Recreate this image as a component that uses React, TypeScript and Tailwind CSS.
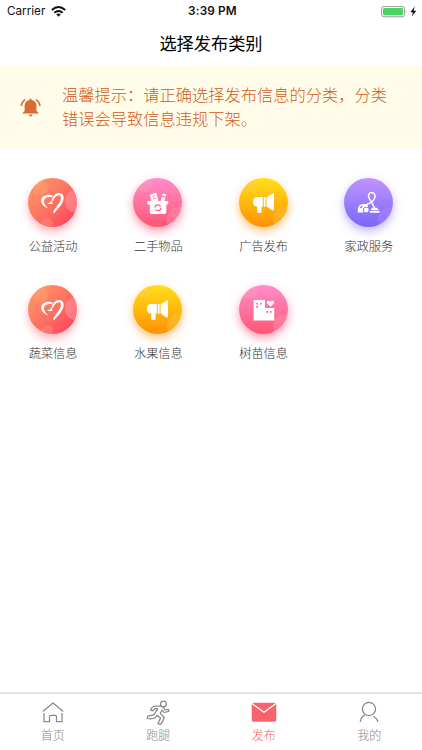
import type { ReactNode } from "react"

type Tone = "coral" | "pink" | "amber" | "violet"

const TONES: Record<Tone, { ball: string; glow: string; bubble: string }> = {
  coral: { ball: "bg-linear-to-br from-[#ff9d68] via-[#fd7361] to-[#ff2f5c]", glow: "shadow-[0_5px_9px_rgba(255,80,100,0.42)]", bubble: "bg-[#ff9aa8]/50" },
  pink: { ball: "bg-linear-to-b from-[#ff8ccb] to-[#ff5473]", glow: "shadow-[0_4px_10px_rgba(255,84,125,0.6)]", bubble: "bg-[#ffa0b8]/35" },
  amber: { ball: "bg-linear-to-b from-[#ffe018] to-[#ff8f05]", glow: "shadow-[0_4px_10px_rgba(255,150,20,0.55)]", bubble: "bg-[#ffc846]/40" },
  violet: { ball: "bg-linear-to-b from-[#c193fd] to-[#7a66f8]", glow: "shadow-[0_4px_10px_rgba(130,105,250,0.5)]", bubble: "bg-[#b08aff]/40" },
}

const heart = (
  <>
    <path
      d="M23.6 22.8C24.3 18 28 14.6 31.4 14.9C35.9 15.4 36.6 20 34.6 24.2C32.6 28.4 29.6 31 26.2 35.2L25.2 34.6C25.6 31.6 30.2 27.2 31.9 23.6C33.5 20 33.3 17.2 31 17.2C28.4 17.2 26.2 19.6 24.8 23Z"
      fill="#fff"
    />
    <path
      d="M24.6 17.6C20.8 15.6 14.2 17.4 13.2 21.8C12.6 25.4 15.2 28.6 20.4 30.6C17.2 27.8 15.6 25.2 16 22.6C16.6 19.6 20.2 18.4 24.2 19.4Z"
      fill="#fff"
    />
    <path d="M20.4 25.4L24 25.2L22.9 23.6" fill="none" stroke="#fff" strokeWidth="1.4" strokeLinecap="round" strokeLinejoin="round" />
  </>
)

const basket = (
  <>
    <path d="M17.3 17L23 15.2L25.2 23.5H19Z" fill="#fff" stroke="#fff" strokeWidth="0.8" strokeLinejoin="round" />
    <path d="M19.4 18.5L22.2 17.7M20 20.8L23 20" stroke="#ff7ea9" strokeWidth="1" />
    <path d="M29.8 15.6L33.4 16.7L32.8 18.6L29.2 17.5ZM28.8 18.7L32.4 19.8L31.2 23.5H27.4Z" fill="#fff" />
    <path d="M15.2 23H34.4Q35.3 23 35.3 23.9V25.6Q35.3 26.5 34.4 26.5H33.3V34.2Q33.3 36 31.5 36H18.6Q16.8 36 16.8 34.2V26.5H15.3Q14.4 26.5 14.4 25.6V23.8Q14.4 23 15.2 23Z" fill="#fff" />
    <circle cx="25" cy="29.8" r="2.9" fill="none" stroke="#ff648f" strokeWidth="1.2" strokeDasharray="7.4 1.7" />
  </>
)

const megaphone = (
  <g fill="#fff">
    <path d="M23.8 19.1V28.6H22.5V34.3Q22.5 35 21.8 35H19Q18.3 35 18.3 34.3V28.6H17.6Q14 28.2 14 23.9T17.6 19.1Z" />
    <path d="M24.8 19H26.6V28.8H24.8Z" />
    <path d="M27.6 19.2L33.6 15.4Q35 14.8 35 16.2V31.6Q35 33 33.6 32.4L27.6 28.6Z" />
  </g>
)

const vacuum = (
  <>
    <path d="M13.8 34.5V31.2Q14.4 26 19.8 26H23.8V34.5Z" fill="#fff" />
    <path d="M15.6 30Q16.6 27.8 18.8 27.6L17.6 30.2Z" fill="#957af9" />
    <circle cx="22.3" cy="32" r="3.3" fill="#8d74f8" />
    <circle cx="22.3" cy="32" r="2.4" fill="#fff" />
    <path d="M23.2 26.4C27.6 24.6 31.2 21.7 31 17.9C30.8 14.3 26.8 13.5 25 16C23.2 18.8 25.8 21.5 27.4 23.8L31 31" fill="none" stroke="#fff" strokeWidth="1.5" strokeLinecap="round" />
    <path d="M28.3 29.8H33L35 32.2H26.3ZM25.8 33H35.7V34.8H25.8Z" fill="#fff" />
  </>
)

const buildings = (
  <>
    <path d="M14.6 15H26V22.9H35.3V35.4H14.6Z" fill="#fff" />
    <path d="M17.2 17.9H19V19.6H17.2ZM20.9 17.9H22.7V19.6H20.9ZM17.2 21H19V22.7H17.2ZM27.3 26H29.1V27.8H27.3ZM30.8 26H32.6V27.8H30.8Z" fill="#ff6a97" />
    <path d="M31.5 21.8L28.3 18.6C26.7 16.3 29.9 14.4 31.5 16.8C33.1 14.4 36.4 16.3 34.7 18.6Z" fill="#fff" />
  </>
)

const CATEGORIES: { name: string; tone: Tone; icon: ReactNode }[] = [
  { name: "公益活动", tone: "coral", icon: heart },
  { name: "二手物品", tone: "pink", icon: basket },
  { name: "广告发布", tone: "amber", icon: megaphone },
  { name: "家政服务", tone: "violet", icon: vacuum },
  { name: "蔬菜信息", tone: "coral", icon: heart },
  { name: "水果信息", tone: "amber", icon: megaphone },
  { name: "树苗信息", tone: "pink", icon: buildings },
]

function Category({ name, tone, icon }: { name: string; tone: Tone; icon: ReactNode }) {
  const t = TONES[tone]
  return (
    <button type="button" className="flex h-[107px] flex-col items-center">
      <span className={`block rounded-full ${t.glow}`}>
        <span className={`relative block h-[49px] w-[49px] overflow-hidden rounded-full ${t.ball}`}>
          {tone === "coral" ? (
            <>
              <span className={`absolute top-[12px] left-[37px] h-[23px] w-[23px] rounded-full ${t.bubble}`} />
              <span className="absolute top-[3px] left-[6px] h-[14px] w-[14px] rounded-full bg-[#ffad78]/35" />
              <span className="absolute top-[40px] left-[13px] h-[12px] w-[12px] rounded-full bg-[#ff9a88]/35" />
            </>
          ) : (
            <>
              <span className={`absolute -top-[4px] left-[1px] h-[18px] w-[18px] rounded-full ${t.bubble}`} />
              <span className={`absolute top-[29px] left-[34px] h-[25px] w-[25px] rounded-full ${t.bubble}`} />
            </>
          )}
          <svg className="relative block h-[49px] w-[49px]" viewBox="0 0 49 49">{icon}</svg>
        </span>
      </span>
      <span className="mt-[10px] pl-px text-[12.2px] leading-[18px] text-[#333]">{name}</span>
    </button>
  )
}

const TABS: { name: string; active?: boolean; icon: ReactNode }[] = [
  {
    name: "首页",
    icon: <path d="M3.8 11.5L14 3L24.2 11.5M5 13V21.5H10.5V16.8Q10.5 15.3 12 15.3H16Q17.5 15.3 17.5 16.8V21.5H23V13" />,
  },
  {
    name: "跑腿",
    icon: (
      <>
        <circle cx="19.5" cy="3.9" r="2.9" />
        <path d="M16 6L9.8 6.3Q7.2 7.6 6.6 10.2L8.7 10.8L11.2 8.5L13.8 8.7L9.8 14.9L3.6 16.2L3.3 18.5Q7.8 19.3 11.3 17.8L13 15.2L16.6 18L14 23.4L16.4 24.6Q18.8 22 20.2 17.5L16.2 13.4L18.2 10L20 12.5L24.8 11.4L24.6 9.5L21.2 9.8L18.9 6.9Z" />
      </>
    ),
  },
  {
    name: "发布",
    active: true,
    icon: (
      <>
        <path d="M3.5 2.7H24.5Q26.3 2.7 26.3 4.5V20Q26.3 21.8 24.5 21.8H3.5Q1.7 21.8 1.7 20V4.5Q1.7 2.7 3.5 2.7Z" fill="#f9646c" stroke="none" />
        <path d="M2 3.5L14 12.3L26 3.5" stroke="#fff" strokeWidth="1.2" />
      </>
    ),
  },
  {
    name: "我的",
    icon: (
      <>
        <circle cx="14" cy="9" r="6.6" />
        <path d="M10 14.8C7.2 16.3 5.7 18.8 5.2 22M18.4 16.2C21 17.6 22.4 19.4 22.8 22" />
      </>
    ),
  },
]

function StatusBar() {
  return (
    <div className="grid h-[22px] grid-cols-3 items-center pt-px pl-[7px] pr-[5px] font-['Inter',sans-serif] text-xs font-normal text-[#111]">
      <div className="flex items-center gap-[6px]">
        <span className="text-[11.7px]">Carrier</span>
        <svg className="h-[11px] w-[15px]" viewBox="0 0 15 11" fill="none" stroke="#111" strokeWidth="1.9">
          <path d="M.8 4Q7.5-1.9 14.2 4M3.3 6.7Q7.5 3.1 11.7 6.7" />
          <path d="M5.2 8.3Q7.5 6.5 9.8 8.3L7.5 10.7Z" fill="#111" stroke="none" />
        </svg>
      </div>
      <span className="pl-px text-center text-[11.8px] font-semibold tracking-[0.15px]">3:39 PM</span>
      <div className="flex items-center justify-end">
        <svg className="h-[12px] w-[36px]" viewBox="0 0 36 12">
          <rect x=".5" y=".4" width="23" height="10.4" rx="2.5" fill="#fff" stroke="#999" />
          <rect x="2" y="1.9" width="20" height="7.4" rx="1.2" fill="#49d363" />
          <path d="M24.8 3.8Q26.2 5.5 24.8 7.3Z" fill="#999" />
          <path d="M33.8 .6L29.3 6.2H32L30.8 10.4L35.3 4.7H32.6Z" fill="#111" />
        </svg>
      </div>
    </div>
  )
}

export default function App() {
  return (
    <div className="flex h-[750px] w-[422px] flex-col bg-white font-['Noto_Sans_CJK_SC',sans-serif] font-light">
      <StatusBar />
      <header className="flex h-[44px] items-center justify-center pb-[3px]">
        <h1 className="text-[17.2px] leading-6 font-normal text-black">选择发布类别</h1>
      </header>

      <section className="flex h-[83px] items-center bg-[#fffdea] pl-[20px]">
        <svg className="h-[22px] w-[22px] shrink-0" viewBox="0 0 22 22" fill="#db6b32">
          <path d="M9.4 3.1V2.5Q9.4 1.5 10.5 1.5T11.6 2.5V3.1Q16.5 4.2 16.5 9V14L18.4 15.7V16.6H2.7V15.7L4.6 14V9Q4.6 4.2 9.4 3.1Z" />
          <path d="M8.7 17.6H12.5Q12 19.6 10.6 19.6T8.7 17.6Z" />
          <path d="M5.2 2.6Q1.5 5.1 1.3 9M16 2.6Q19.7 5.1 19.9 9" fill="none" stroke="#db6b32" strokeWidth="1.7" />
        </svg>
        <p className="ml-[20px] w-[340px] pb-[3px] text-[16.25px] leading-[24px] text-[#d25a20]">
          温馨提示：请正确选择发布信息的分类，分类错误会导致信息违规下架。
        </p>
      </section>

      <main className="grid w-[421px] flex-1 grid-cols-4 content-start pt-[29px]">
        {CATEGORIES.map((c) => <Category key={c.name} {...c} />)}
      </main>

      <nav className="grid h-[58px] w-full grid-cols-4 border-t-2 border-[#e2e2e2]">
        {TABS.map((tab) => (
          <button key={tab.name} type="button" className={`flex flex-col items-center pt-[6px] ${tab.active ? "text-[#f9646c]" : "text-[#888]"}`}>
            <svg className="h-[26px] w-[28px]" viewBox="0 0 28 26" fill="none" stroke="currentColor" strokeWidth="1.25" strokeLinejoin="round">{tab.icon}</svg>
            <span className="text-[12px] leading-[18px]">{tab.name}</span>
          </button>
        ))}
      </nav>
    </div>
  )
}
